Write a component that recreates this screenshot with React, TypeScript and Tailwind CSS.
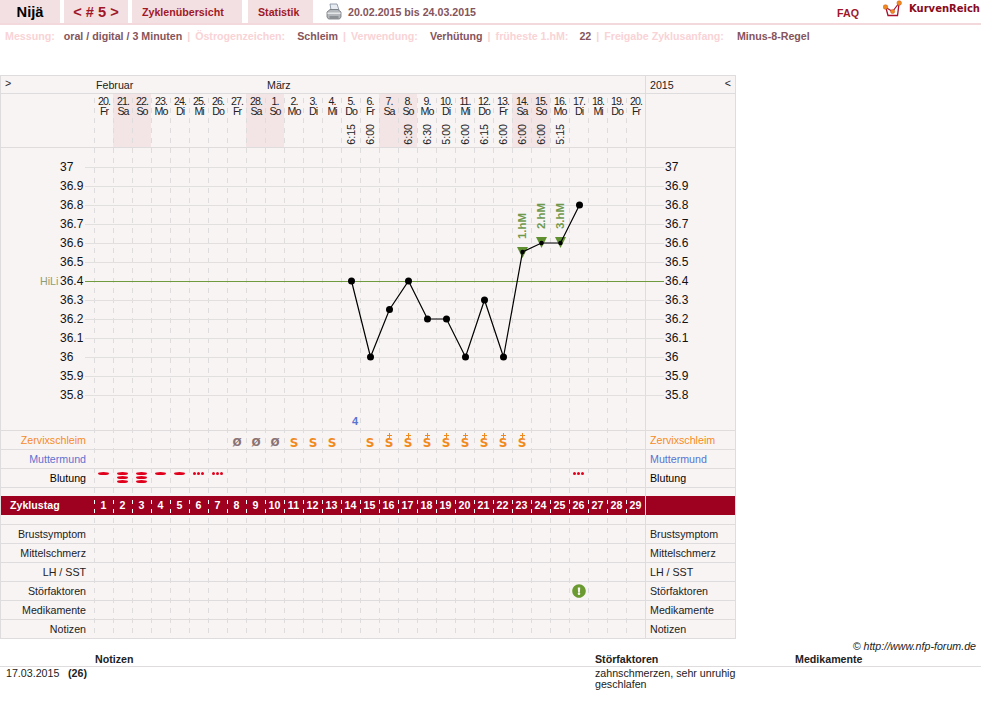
import { FaExclamationCircle } from "react-icons/fa";

const days = [
  ["20.", "Fr"], ["21.", "Sa"], ["22.", "So"], ["23.", "Mo"], ["24.", "Di"], ["25.", "Mi"], ["26.", "Do"], ["27.", "Fr"], ["28.", "Sa"],
  ["1.", "So"], ["2.", "Mo"], ["3.", "Di"], ["4.", "Mi"], ["5.", "Do"], ["6.", "Fr"], ["7.", "Sa"], ["8.", "So"], ["9.", "Mo"],
  ["10.", "Di"], ["11.", "Mi"], ["12.", "Do"], ["13.", "Fr"], ["14.", "Sa"], ["15.", "So"], ["16.", "Mo"], ["17.", "Di"], ["18.", "Mi"],
  ["19.", "Do"], ["20.", "Fr"],
];

const times: Record<number, string> = {
  13: "6:15", 14: "6:00", 16: "6:30", 17: "6:30", 18: "5:00", 19: "6:00", 20: "6:15", 21: "6:00", 22: "6:00", 23: "6:00", 24: "5:15",
};

const temps = ["37", "36.9", "36.8", "36.7", "36.6", "36.5", "36.4", "36.3", "36.2", "36.1", "36", "35.9", "35.8"];

// index of the day, y in page pixels
const points: [number, number][] = [
  [13, 281], [14, 357], [15, 309.5], [16, 281], [17, 319], [18, 319], [19, 357], [20, 300], [21, 357], [22, 252], [23, 243], [24, 243], [25, 205],
];

const dayX = (i: number) => 94 + 19 * i + 10.5;

function Row({ label, labelClass = "text-[#222]", cells = {} }: { label: string; labelClass?: string; cells?: Record<number, React.ReactNode> }) {
  return (
    <div className="flex h-[19px] border-t border-[#dedcdc]">
      <div className={`w-[93px] pr-[8px] text-right leading-[19px] ${labelClass}`}>{label}</div>
      <div className="grid w-[551px] grid-cols-[repeat(29,19px)]">
        {days.map((_, i) => (
          <div key={i} className="flex items-start justify-center">
            {cells[i]}
          </div>
        ))}
      </div>
      <div className={`w-[90px] border-l border-[#dedcdc] pl-[4px] leading-[19px] ${labelClass}`}>{label}</div>
    </div>
  );
}

function Spacer({ className }: { className: string }) {
  return (
    <div className={`flex border-t border-[#dedcdc] ${className}`}>
      <div className="w-[644px]" />
      <div className="w-[90px] border-l border-[#dedcdc]" />
    </div>
  );
}

function SlashO() {
  return <span className="mt-[1px] ml-[1px] text-[15px] leading-[17px] font-bold text-[#8a7272]">ø</span>;
}

function Mucus({ plus }: { plus?: boolean }) {
  return (
    <span className="ml-[1px] flex flex-col items-center font-['DejaVu_Sans',sans-serif] font-bold text-[#f08a1d]">
      <span className="mt-[1px] flex h-[7px] items-start">
        {plus && (
          <svg width="5" height="5" viewBox="0 0 5 5" className="mt-[1px]">
            <path d="M0 2h5v1H0zM2 0h1v5H2z" fill="#f08a1d" />
          </svg>
        )}
      </span>
      <span className="h-[9px] text-[12px] leading-[9px]">S</span>
    </span>
  );
}

function Bar() {
  return <span className="block h-[3px] w-[11px] rounded-[50%] bg-[#e0001c]" />;
}

function Bleed({ stack }: { stack?: boolean }) {
  return (
    <span className="mt-[3px] flex flex-col gap-[1px]">
      <Bar />
      {stack && <Bar />}
      {stack && <Bar />}
    </span>
  );
}

function Dots() {
  return (
    <span className="mt-[3px] flex gap-[1px]">
      <span className="h-[3px] w-[3px] rounded-full bg-[#e0001c]" />
      <span className="h-[3px] w-[3px] rounded-full bg-[#e0001c]" />
      <span className="h-[3px] w-[3px] rounded-full bg-[#e0001c]" />
    </span>
  );
}

function Sep() {
  return <span className="mx-[5px] text-[#f9d3d6]">|</span>;
}

function Meta({ label, value, gap }: { label: string; value: string; gap: string }) {
  return (
    <>
      <span className="text-[#f9d3d6]">{label}</span>
      <span className={`${gap} text-[#85545c]`}>{value}</span>
    </>
  );
}

function Printer() {
  return (
    <svg width="16" height="18" viewBox="0 0 16 18" className="ml-[13px]">
      <path d="M4 1h7l2 6H5z" fill="#e8edf4" stroke="#7d8a99" strokeWidth="0.8" />
      <path d="M1 9l3-2.5h8L15 9v5l-1.5 2h-11L1 14z" fill="#b4b8bc" stroke="#6f7479" strokeWidth="0.8" />
      <path d="M1.5 9.5h13v1.5h-13z" fill="#e4e6e8" />
      <path d="M3.5 13h9v3h-9z" fill="#8c9095" />
    </svg>
  );
}

function Logo() {
  return (
    <svg width="22" height="19" viewBox="0 0 22 19" className="mr-[4px]">
      <path d="M3 8l2 7.5h9.5L16 4" fill="none" stroke="#a8102c" strokeWidth="1.3" />
      <path d="M2 7l7.6 4.5L16 3" fill="none" stroke="#a8102c" strokeWidth="1.2" />
      <circle cx="2.5" cy="7" r="2.3" fill="#f08a1d" stroke="#c8541a" strokeWidth="0.5" />
      <circle cx="9.6" cy="11.5" r="2.1" fill="#f08a1d" stroke="#c8541a" strokeWidth="0.5" />
      <circle cx="16.2" cy="3" r="2.3" fill="#f08a1d" stroke="#c8541a" strokeWidth="0.5" />
    </svg>
  );
}

function Chart() {
  return (
    <svg viewBox="0 148 736 282" className="absolute top-[55px] left-[-1px] z-10 h-[282px] w-[736px]">
      {temps.map((t, i) => {
        const y = 167 + 19 * i;
        return (
          <g key={t}>
            {t !== "36.4" && <line x1="85" x2="664" y1={y + 0.5} y2={y + 0.5} stroke="#e2dfdf" />}
            <text x="60" y={y + 4} fontSize="12" fill="#111" fontFamily="Liberation Sans">{t}</text>
            <text x="665" y={y + 4} fontSize="12" fill="#111" fontFamily="Liberation Sans">{t}</text>
          </g>
        );
      })}
      <line x1="85" x2="664" y1="281.5" y2="281.5" stroke="#6f9a3e" />
      <text x="40" y="285" fontSize="10.67" fill="#8e9c74" fontFamily="Liberation Sans">HiLi</text>
      <text x="352" y="425" fontSize="11" fontWeight="bold" fill="#5a73d0" fontFamily="Liberation Sans">4</text>
      {[[22, 247], [23, 237], [24, 237]].map(([d, y]) => (
        <path key={d} d={`M${dayX(d) - 5.5} ${y}h11l-5.5 11z`} fill="#5f8f2e" />
      ))}
      <polyline points={points.map(([d, y]) => `${dayX(d)},${y}`).join(" ")} fill="none" stroke="#000" strokeWidth="1.2" />
      {points.map(([d, y]) => (
        <circle key={d} cx={dayX(d)} cy={y} r={d > 21 && d < 25 ? 2.2 : 3.5} fill="#000" />
      ))}
      {[[22, 226, "1.hM"], [23, 216, "2.hM"], [24, 216, "3.hM"]].map(([d, y, t]) => (
        <text
          key={t as string}
          transform={`translate(${dayX(d as number) + 3.5} ${y}) rotate(-90)`}
          textAnchor="middle"
          fontSize="11.5"
          fontWeight="bold"
          fill="#6f9a4e"
          fontFamily="Liberation Sans"
        >
          {t}
        </text>
      ))}
    </svg>
  );
}

export default function App() {
  const zervix: Record<number, React.ReactNode> = {
    7: <SlashO />, 8: <SlashO />, 9: <SlashO />, 10: <Mucus />, 11: <Mucus />, 12: <Mucus />, 14: <Mucus />,
    15: <Mucus plus />, 16: <Mucus plus />, 17: <Mucus plus />, 18: <Mucus plus />, 19: <Mucus plus />, 20: <Mucus plus />, 21: <Mucus plus />, 22: <Mucus plus />,
  };
  const blutung: Record<number, React.ReactNode> = {
    0: <Bleed />, 1: <Bleed stack />, 2: <Bleed stack />, 3: <Bleed />, 4: <Bleed />, 5: <Dots />, 6: <Dots />, 25: <Dots />,
  };

  return (
    <div className="min-h-[713px] w-[981px] bg-white font-['Liberation_Sans',Arial,sans-serif] text-[10.67px] text-[#222]">
      <header className="flex h-[25px] items-start border-b-2 border-[#f3d9dc]">
        <div className="flex h-[23px] w-[60px] items-center justify-center bg-[#f3e0e2] pt-[1px] text-[14.67px] font-bold text-black">Nijä</div>
        <div className="ml-[4px] flex h-[23px] w-[64px] items-center justify-center bg-[#f3e0e2] pt-[1px] text-[14.67px] font-bold text-[#a01828]">&lt; # 5 &gt;</div>
        <div className="ml-[4px] flex h-[23px] w-[110px] items-center bg-[#f3e0e2] pt-[1px] pl-[10px] font-bold text-[#a01828]">Zyklenübersicht</div>
        <div className="ml-[6px] flex h-[23px] w-[65px] items-center bg-[#f3e0e2] pt-[1px] pl-[10px] font-bold text-[#a01828]">Statistik</div>
        <div className="flex h-[23px] items-center">
          <Printer />
          <span className="mt-[1px] ml-[6px] font-bold text-[#85545c]">20.02.2015 bis 24.03.2015</span>
        </div>
        <div className="ml-auto flex h-[23px] items-start">
          <span className="mt-[7px] mr-[24px] leading-[13px] font-bold text-[#a01828]">FAQ</span>
          <Logo />
          <span className="mt-[3px] mr-[1px] font-['DejaVu_Sans',sans-serif] text-[10px] leading-[12px] font-bold text-[#8a0a20]">KurvenReich</span>
        </div>
      </header>

      <div className="flex h-[50px] items-start pt-[5px] pl-[5px] leading-[13px] font-bold">
        <Meta label="Messung:" value="oral / digital / 3 Minuten" gap="ml-[9px]" />
        <Sep />
        <Meta label="Östrogenzeichen:" value="Schleim" gap="ml-[12px]" />
        <Sep />
        <Meta label="Verwendung:" value="Verhütung" gap="ml-[12px]" />
        <Sep />
        <Meta label="früheste 1.hM:" value="22" gap="ml-[11px]" />
        <Sep />
        <Meta label="Freigabe Zyklusanfang:" value="Minus-8-Regel" gap="ml-[13px]" />
      </div>

      <div className="w-[736px] border-x border-y border-[#dedcdc] bg-[#f9f4f4]">
        <div className="flex h-[17px] leading-[18px]">
          <div className="w-[93px] pl-[4px] leading-[15px] text-[#222]">&gt;</div>
          <div className="flex w-[551px]">
            <span className="w-[171px] pl-[2px]">Februar</span>
            <span className="pl-[2px]">März</span>
          </div>
          <div className="flex w-[90px] justify-between border-l border-[#dedcdc] px-[4px]">
            <span>2015</span>
            <span className="leading-[15px]">&lt;</span>
          </div>
        </div>

        <div className="relative">
          <div className="flex h-[54px] border-t border-[#dedcdc]">
            <div className="w-[93px]" />
            <div className="grid w-[551px] grid-cols-[repeat(29,19px)]">
              {days.map(([d, w], i) => (
                <div
                  key={i}
                  className={`flex flex-col items-center pt-[2px] pl-[1px] leading-[10px] tracking-[-1px] ${[1, 2, 8, 9, 15, 16, 22, 23].includes(i) ? "bg-[#f3e4e6]" : ""}`}
                >
                  <span>{d}</span>
                  <span>{w}</span>
                  {times[i] && <span className="mt-auto mb-[2px] rotate-180 tracking-normal [writing-mode:vertical-rl]">{times[i]}</span>}
                </div>
              ))}
            </div>
            <div className="w-[90px] border-l border-[#dedcdc]" />
          </div>

          <Chart />
          <div className="flex h-[283px] border-t border-[#dedcdc]">
            <div className="w-[644px]" />
            <div className="w-[90px] border-l border-[#dedcdc]" />
          </div>

          <Row label="Zervixschleim" labelClass="text-[#f68b1f]" cells={zervix} />
          <Row label="Muttermund" labelClass="text-[#5a73d0]" />
          <Row label="Blutung" labelClass="text-black" cells={blutung} />
          <Spacer className="h-[9px]" />

          <div className="relative z-10 flex h-[19px] bg-[#9e001f] font-bold text-white">
            <div className="w-[93px] pl-[9px] leading-[19px]">Zyklustag</div>
            <div className="grid w-[551px] grid-cols-[repeat(29,19px)]">
              {days.map((_, i) => (
                <div key={i} className="bg-[linear-gradient(#fff_4px,transparent_4px)] bg-[length:1px_9px] bg-[position:0_4px] bg-repeat-y text-center leading-[19px]">
                  {i + 1}
                </div>
              ))}
            </div>
            <div className="w-[90px] border-l border-[#f3d9dc]" />
          </div>

          <div className="h-[10px] border-b border-[#dedcdc]">
            <div className="ml-[644px] h-[10px] w-[90px] border-l border-[#dedcdc]" />
          </div>
          <div className="-mt-[1px]">
            <Row label="Brustsymptom" />
            <Row label="Mittelschmerz" />
            <Row label="LH / SST" />
            <Row
              label="Störfaktoren"
              cells={{ 25: <FaExclamationCircle className="mt-[2px] h-[14px] w-[14px] text-[#6a9a30]" /> }}
            />
            <Row label="Medikamente" />
            <Row label="Notizen" />
          </div>

          <div className="pointer-events-none absolute top-0 bottom-0 left-[93px] grid w-[551px] grid-cols-[repeat(29,19px)]">
            {days.map((_, i) => (
              <div key={i} className="bg-[linear-gradient(#dedcdc_5px,transparent_5px)] bg-[length:1px_10px] bg-[position:0_-5px] bg-repeat-y" />
            ))}
          </div>
        </div>
      </div>

      <div className="pt-[1px] pr-[5px] text-right leading-[13px] text-[#222] italic">© http://www.nfp-forum.de</div>
      <div className="flex h-[14px] border-b border-[#dedcdc] pl-[95px] leading-[13px] font-bold">
        <span className="w-[500px]">Notizen</span>
        <span className="w-[200px]">Störfaktoren</span>
        <span>Medikamente</span>
      </div>
      <div className="flex pt-[1px] leading-[11px]">
        <span className="ml-[6px] w-[62px]">17.03.2015</span>
        <span className="w-[527px] font-bold">(26)</span>
        <span className="w-[145px]">zahnschmerzen, sehr unruhig geschlafen</span>
      </div>
    </div>
  );
}
